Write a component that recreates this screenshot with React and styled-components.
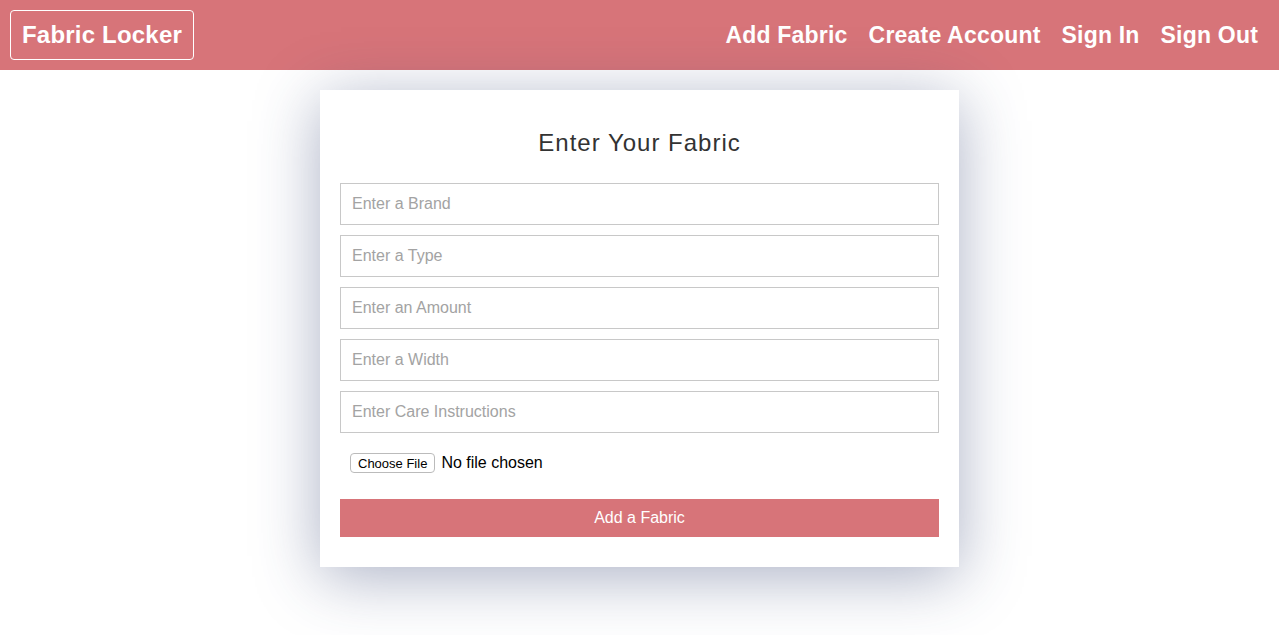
import styled, { createGlobalStyle } from 'styled-components';

const GlobalStyle = createGlobalStyle`
	body {
		margin: 0;
		background: #fff;
		font-family: 'Liberation Sans', Arial, sans-serif;
	}
	* {
		box-sizing: border-box;
	}
`;

const fields = [
	'Enter a Brand',
	'Enter a Type',
	'Enter an Amount',
	'Enter a Width',
	'Enter Care Instructions',
];

function App() {
	return (
		<>
			<GlobalStyle />
			<Nav>
				<Logo>Fabric Locker</Logo>
				<Links>
					<NavLink href="#">Add Fabric</NavLink>
					<NavLink href="#">Create Account</NavLink>
					<NavLink href="#">Sign In</NavLink>
					<NavLink href="#">Sign Out</NavLink>
				</Links>
			</Nav>
			<Main>
				<Card>
					<Title>Enter Your Fabric</Title>
					<Form onSubmit={(e) => e.preventDefault()}>
						{fields.map((f) => (
							<Input key={f} type="text" placeholder={f} />
						))}
						<FileRow>
							<FileInput type="file" />
						</FileRow>
						<Submit type="submit">Add a Fabric</Submit>
					</Form>
				</Card>
			</Main>
		</>
	);
}

const Nav = styled.nav`
	height: 70px;
	background: #d77479;
	display: flex;
	align-items: center;
	justify-content: space-between;
	padding: 0 21px 0 10px;
`;

const Logo = styled.div`
	height: 50px;
	width: 184px;
	display: flex;
	align-items: center;
	justify-content: center;
	border: 1px solid #fff;
	border-radius: 4px;
	color: #fff;
	font-size: 24px;
	font-weight: bold;
	letter-spacing: 0.2px;
`;

const Links = styled.div`
	display: flex;
	gap: 21px;
`;

const NavLink = styled.a`
	color: #fff;
	text-decoration: none;
	font-size: 23px;
	font-weight: bold;
	letter-spacing: 0.2px;
`;

const Main = styled.main`
	display: flex;
	justify-content: center;
	padding: 20px 0 80px;
	min-height: calc(100vh - 70px);
	align-items: flex-start;
`;

const Card = styled.div`
	position: relative;
	width: 639px;
	background: #fff;
	padding: 20px 20px 30px;
	box-shadow: 0 10px 60px rgba(45, 60, 110, 0.4);
`;

const Title = styled.h2`
	margin: 18px 0 25px;
	line-height: 30px;
	text-align: center;
	font-size: 24px;
	font-weight: normal;
	letter-spacing: 1px;
	color: #333;
`;

const Form = styled.form`
	display: flex;
	flex-direction: column;
	gap: 10px;
`;

const Input = styled.input`
	height: 42px;
	width: 100%;
	border: 1px solid #c8c8c8;
	padding: 0 11px;
	font-size: 16px;
	font-family: 'Liberation Sans', Arial, sans-serif;
	color: #333;
	outline: none;

	&::placeholder {
		color: #a3a3a3;
	}
`;

const FileRow = styled.div`
	padding: 10px 10px 6px;
	height: 46px;
	display: flex;
	align-items: flex-start;
`;

const FileInput = styled.input`
	font-size: 16px;
	font-family: 'Liberation Sans', Arial, sans-serif;
	color: #000;

	&::file-selector-button {
		font-size: 13px;
		font-family: 'Liberation Sans', Arial, sans-serif;
		height: 20px;
		padding: 0 7px;
		margin-right: 6px;
		background: #fff;
		border: 1px solid #bbb;
		border-radius: 4px;
		color: #000;
	}
`;

const Submit = styled.button`
	height: 38px;
	width: 100%;
	border: none;
	background: #d77479;
	color: #fff;
	font-size: 16px;
	font-family: 'Liberation Sans', Arial, sans-serif;
	cursor: pointer;
`;

export default App;
